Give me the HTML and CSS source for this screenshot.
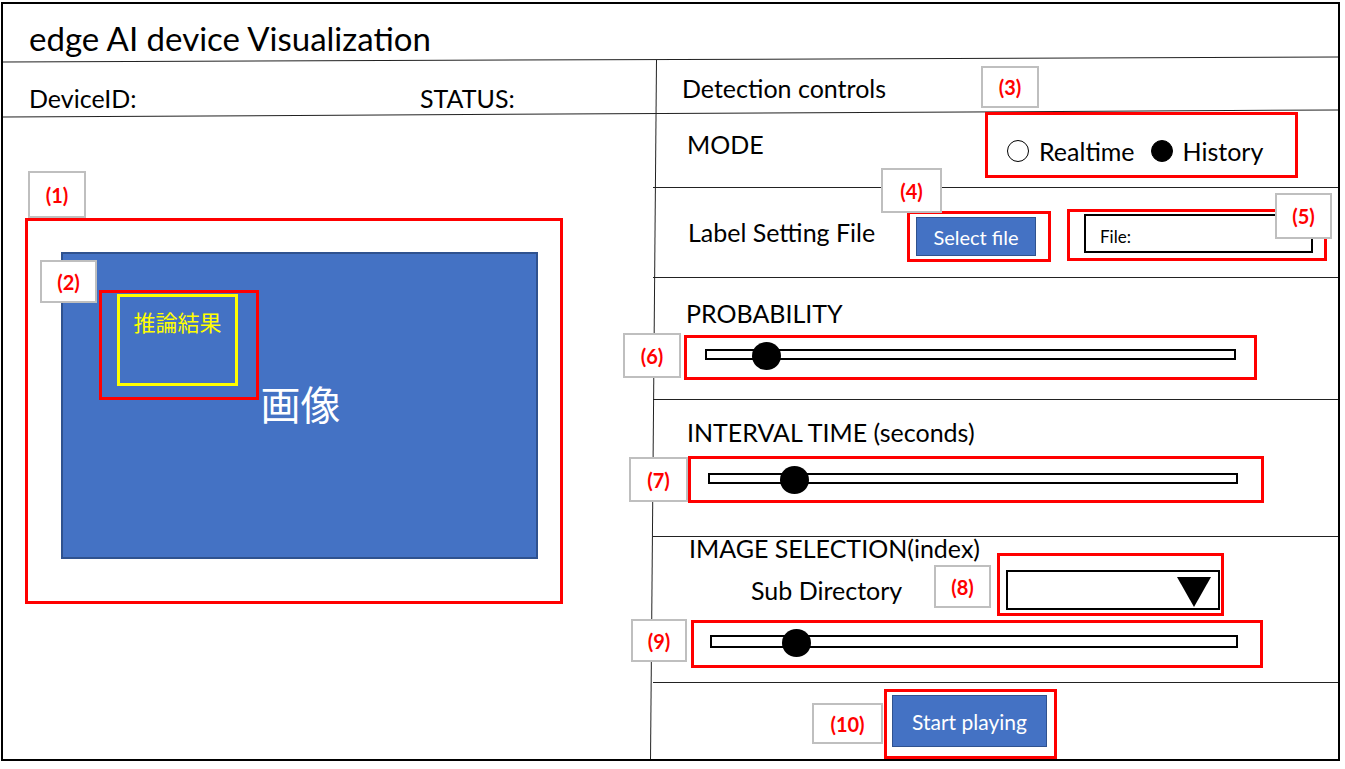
FILE: index.html
```html
<!DOCTYPE html>
<html lang="ja">
<head>
<meta charset="utf-8">
<title>edge AI device Visualization</title>
<link rel="stylesheet" href="styles.css">
</head>
<body>
<div class="slide">
  <header class="title-bar">
    <h1 class="title">edge AI device Visualization</h1>
  </header>
  <div class="main">
    <section class="left-col">
      <div class="info-row">
        <span class="info-device">DeviceID:</span>
        <span class="info-status">STATUS:</span>
      </div>
      <div class="viewer">
        <div class="mark mark-viewer">
          <span class="badge badge-1">(1)</span>
          <div class="image-box">
            <div class="mark mark-result">
              <span class="badge badge-2">(2)</span>
              <div class="result-box">推論結果</div>
            </div>
            <span class="image-label">画像</span>
          </div>
        </div>
      </div>
    </section>
    <section class="right-col">
      <div class="controls-head">Detection controls</div>

      <div class="ctrl ctrl-mode">
        <span class="ctrl-label label-mode">MODE</span>
        <div class="mark mark-mode">
          <span class="badge badge-3">(3)</span>
          <span class="radio"><span class="radio-dot"></span>Realtime</span>
          <span class="radio"><span class="radio-dot is-on"></span>History</span>
        </div>
      </div>

      <div class="ctrl ctrl-file">
        <span class="ctrl-label label-file">Label Setting File</span>
        <div class="mark mark-file-btn">
          <span class="badge badge-4">(4)</span>
          <button class="btn btn-select" type="button">Select file</button>
        </div>
        <div class="mark mark-file-path">
          <span class="badge badge-5">(5)</span>
          <div class="file-field">File:</div>
        </div>
      </div>

      <div class="ctrl ctrl-prob">
        <span class="ctrl-label label-prob">PROBABILITY</span>
        <div class="mark mark-slider mark-prob">
          <span class="badge badge-6">(6)</span>
          <div class="track track-prob"><span class="knob knob-prob"></span></div>
        </div>
      </div>

      <div class="ctrl ctrl-interval">
        <span class="ctrl-label label-interval">INTERVAL TIME (seconds)</span>
        <div class="mark mark-slider mark-interval">
          <span class="badge badge-7">(7)</span>
          <div class="track track-interval"><span class="knob knob-interval"></span></div>
        </div>
      </div>

      <div class="ctrl ctrl-image">
        <span class="ctrl-label label-image">IMAGE SELECTION(index)</span>
        <div class="subdir-row">
          <span class="ctrl-label label-subdir">Sub Directory</span>
          <div class="mark mark-subdir">
            <span class="badge badge-8">(8)</span>
            <div class="dropdown">
              <svg class="dropdown-arrow" width="34" height="30" viewBox="0 0 34 30"><polygon points="0,0 34,0 17,30" fill="#000"/></svg>
            </div>
          </div>
        </div>
        <div class="mark mark-slider mark-index">
          <span class="badge badge-9">(9)</span>
          <div class="track track-index"><span class="knob knob-index"></span></div>
        </div>
      </div>

      <div class="ctrl ctrl-start">
        <div class="mark mark-start">
          <span class="badge badge-10">(10)</span>
          <button class="btn btn-start" type="button">Start playing</button>
        </div>
      </div>
    </section>
  </div>
</div>
</body>
</html>
```

FILE: styles.css
```css
* {
  box-sizing: border-box;
  margin: 0;
  padding: 0;
}

html, body {
  background: #fff;
}

body {
  margin: 0;
  font-family: Lato, "Noto Sans CJK JP", sans-serif;
  color: #000;
}

.slide {
  margin: 2px 0 0 1px;
  width: 1339px;
  height: 759px;
  border: 2px solid #000;
  display: flex;
  flex-direction: column;
  position: relative;
  overflow: hidden;
}

/* ---------- title ---------- */
.title-bar {
  height: 56px;
  padding-left: 26px;
  display: flex;
  align-items: center;
  position: relative;
  flex-shrink: 0;
}

.title-bar::after {
  content: "";
  position: absolute;
  left: -4px;
  right: -4px;
  bottom: 0;
  height: 1px;
  background: #222;
  transform: rotate(-0.214deg);
}

.title {
  font-size: 33px;
  font-weight: 400;
  line-height: 40px;
  padding-top: 12px;
}

/* ---------- main ---------- */
.main {
  flex: 1;
  display: flex;
  position: relative;
}

.main::before {
  content: "";
  position: absolute;
  left: -4px;
  right: -4px;
  top: 53px;
  height: 1px;
  background: #222;
  transform: rotate(-0.3deg);
}

.main::after {
  content: "";
  position: absolute;
  left: 650px;
  top: 0;
  bottom: -2px;
  width: 1px;
  background: #222;
  transform: rotate(0.49deg);
}

.left-col {
  width: 650px;
  flex-shrink: 0;
  display: flex;
  flex-direction: column;
}

.info-row {
  height: 55px;
  display: flex;
  align-items: flex-end;
  padding: 0 0 2px 26px;
  font-size: 25px;
  line-height: 30px;
}

.info-device {
  width: 391px;
}

.viewer {
  padding: 103px 0 0 22px;
}

/* ---------- annotation marks ---------- */
.mark {
  position: relative;
  border: 3px solid #ff0000;
  flex-shrink: 0;
}

.badge {
  position: absolute;
  display: flex;
  align-items: center;
  justify-content: center;
  background: #fff;
  border: 2px solid #bfbfbf;
  color: #ff0000;
  font-weight: 700;
  font-size: 20px;
  line-height: 1;
  z-index: 2;
}

.badge-1 { left: 0; top: -50px; width: 58px; height: 47px; }
.badge-2 { left: -62px; top: -33px; width: 57px; height: 43px; }
.badge-3 { left: -7px; top: -49px; width: 58px; height: 42px; }
.badge-4 { left: -29px; top: -46px; width: 61px; height: 45px; }
.badge-5 { left: 205px; top: -19px; width: 57px; height: 46px; }
.badge-6 { left: -64px; top: -5px; width: 58px; height: 45px; }
.badge-7 { left: -62px; top: -2px; width: 59px; height: 45px; }
.badge-8 { left: -66px; top: 9px; width: 57px; height: 43px; }
.badge-9 { left: -63px; top: -4px; width: 56px; height: 43px; }
.badge-10 { left: -75px; top: 11px; width: 71px; height: 41px; }

/* ---------- viewer ---------- */
.mark-viewer {
  width: 538px;
  height: 386px;
  padding: 31px 0 0 33px;
}

.image-box {
  position: relative;
  width: 477px;
  height: 307px;
  background: #4472c4;
  border: 2px solid #2f528f;
  display: flex;
  align-items: center;
  justify-content: center;
}

.image-label {
  color: #fff;
  font-family: "Noto Sans CJK JP", sans-serif;
  font-size: 40px;
  font-weight: 400;
  line-height: 1;
  margin: 0 0 5px 2px;
}

.mark-result {
  position: absolute;
  left: 36px;
  top: 36px;
  width: 160px;
  height: 110px;
  padding: 1px 0 0 15px;
}

.result-box {
  width: 121px;
  height: 92px;
  border: 3px solid #ffff00;
  color: #ffff00;
  font-family: "Noto Sans CJK JP", sans-serif;
  font-size: 22px;
  line-height: 26px;
  text-align: center;
  padding-top: 11px;
}

/* ---------- controls ---------- */
.right-col {
  flex: 1;
  display: flex;
  flex-direction: column;
}

.controls-head {
  height: 55px;
  padding: 13px 0 0 29px;
  font-size: 25px;
  line-height: 30px;
}

.ctrl {
  border-bottom: 1px solid #222;
  flex-shrink: 0;
}

.ctrl-label {
  font-size: 25px;
  line-height: 30px;
  white-space: nowrap;
  flex-shrink: 0;
}

/* mode */
.ctrl-mode {
  height: 73px;
  display: flex;
  align-items: flex-start;
  padding-left: 34px;
}

.label-mode {
  width: 298px;
  margin-top: 14px;
}

.mark-mode {
  width: 313px;
  height: 66px;
  margin-top: -3px;
  padding: 11px 0 0 19px;
  display: flex;
  align-items: center;
  font-size: 25px;
  line-height: 30px;
}

.radio {
  display: flex;
  align-items: center;
}

.radio + .radio {
  margin-left: 16px;
}

.radio-dot {
  width: 22px;
  height: 22px;
  border: 1.5px solid #000;
  border-radius: 50%;
  margin-right: 10px;
}

.radio-dot.is-on {
  background: #000;
}

/* label file */
.ctrl-file {
  height: 90px;
  display: flex;
  align-items: flex-start;
  padding-left: 35px;
}

.label-file {
  width: 219px;
  margin-top: 29px;
}

.mark-file-btn {
  width: 144px;
  height: 51px;
  margin-top: 23px;
  padding: 3px 0 0 6px;
}

.btn {
  display: flex;
  align-items: center;
  justify-content: center;
  background: #4472c4;
  border: 1.5px solid #2f528f;
  color: #fff;
  font-family: Lato, sans-serif;
}

.btn-select {
  width: 120px;
  height: 39px;
  font-size: 20px;
}

.mark-file-path {
  width: 260px;
  height: 52px;
  margin: 21px 0 0 16px;
  padding: 2px 0 0 14px;
}

.file-field {
  width: 229px;
  height: 39px;
  border: 2px solid #000;
  font-size: 17px;
  line-height: 20px;
  padding: 11px 0 0 14px;
}

/* sliders */
.ctrl-prob {
  height: 122px;
  display: flex;
  flex-direction: column;
  align-items: flex-start;
}

.label-prob {
  margin: 20px 0 0 33px;
}

.mark-prob {
  width: 573px;
  height: 45px;
  margin: 7px 0 0 31px;
  padding: 11px 0 0 18px;
}

.track {
  display: flex;
  align-items: center;
  background: #fff;
  border: 2px solid #000;
}

.knob {
  width: 29px;
  height: 28px;
  border-radius: 50%;
  background: #000;
  flex-shrink: 0;
}

.track-prob {
  width: 531px;
  height: 11px;
}

.knob-prob { margin: 3px 0 0 45px; }

.ctrl-interval {
  height: 137px;
  display: flex;
  flex-direction: column;
  align-items: flex-start;
}

.label-interval {
  margin: 17px 0 0 34px;
}

.mark-interval {
  width: 576px;
  height: 47px;
  margin: 9px 0 0 35px;
  padding: 14px 0 0 17px;
}

.track-interval {
  width: 530px;
  height: 11px;
}

.knob-interval { margin: 3px 0 0 70px; }

/* image selection */
.ctrl-image {
  height: 146px;
  display: flex;
  flex-direction: column;
  align-items: flex-start;
}

.label-image {
  margin: -4px 0 0 36px;
}

.subdir-row {
  display: flex;
  align-items: flex-start;
  margin-top: -10px;
  padding-left: 98px;
}

.label-subdir {
  width: 246px;
  margin-top: 22px;
}

.mark-subdir {
  width: 227px;
  height: 63px;
  padding: 14px 0 0 6px;
}

.dropdown {
  width: 214px;
  height: 40px;
  border: 2.5px solid #000;
  display: flex;
  align-items: center;
  justify-content: flex-end;
  padding-right: 7px;
}

.dropdown-arrow {
  display: block;
  margin-top: 3px;
}

.mark-index {
  width: 572px;
  height: 48px;
  margin: 4px 0 0 38px;
  padding: 12px 0 0 16px;
}

.track-index {
  width: 528px;
  height: 13px;
}

.knob-index { margin: 2px 0 0 70px; }

/* start */
.ctrl-start {
  flex: 1;
  border-bottom: none;
  padding: 6px 0 0 231px;
}

.mark-start {
  width: 173px;
  height: 70px;
  padding: 3px 0 0 5px;
}

.btn-start {
  width: 155px;
  height: 52px;
  font-size: 21px;
}
```
